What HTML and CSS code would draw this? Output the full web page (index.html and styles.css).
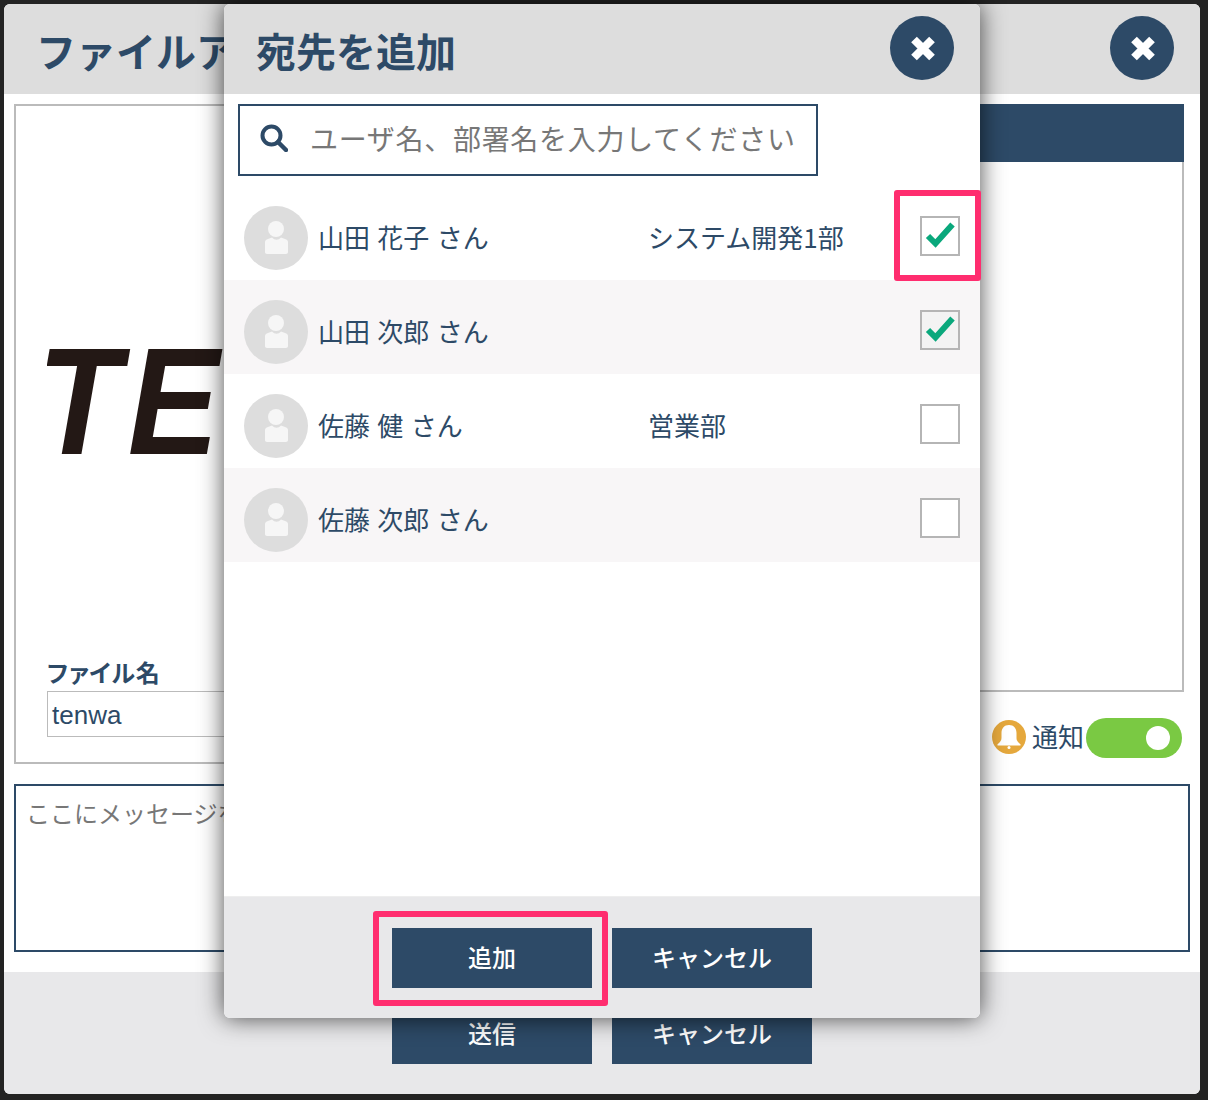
FILE: index.html
```html
<!DOCTYPE html>
<html lang="ja">
<head>
<meta charset="utf-8">
<title>宛先を追加</title>
<link rel="stylesheet" href="styles.css">
</head>
<body>
<div class="screen">
  <div class="dialog">
    <header class="dialog-head">
      <h1 class="title title-main">ファイルアップロード</h1>
      <button class="close"><svg viewBox="0 0 64 64" width="64" height="64"><path d="M24 23.500 L42 41.500 M42 23.500 L24 41.500" class="close-x"/></svg></button>
    </header>
    <div class="dialog-body">
      <div class="top-row">
        <section class="preview">
          <div class="logo-area"><span class="logo">TENWA</span></div>
          <label class="file-label">ファイル名</label>
          <div class="file-input">tenwa</div>
        </section>
        <section class="side">
          <div class="side-head"></div>
          <div class="side-box"></div>
          <div class="notify">
            <svg class="bell" viewBox="0 0 34 34" width="34" height="34"><circle cx="17" cy="17" r="17" fill="#e5a83c"/><path d="M17 5c-4.800 0-7.500 3.300-7.500 8v5c0 2.800-1.800 4.800-4 6.200v1.300h23v-1.300c-2.200-1.400-4-3.400-4-6.200v-5c0-4.700-2.700-8-7.500-8z" fill="#fff"/><circle cx="17" cy="27.500" r="1.500" fill="#fff"/></svg>
            <span class="notify-text">通知</span>
            <span class="toggle"><span class="knob"></span></span>
          </div>
        </section>
      </div>
      <div class="message">ここにメッセージを入力してください</div>
    </div>
    <footer class="foot">
      <button class="btn">送信</button>
      <button class="btn">キャンセル</button>
    </footer>
  </div>

  <div class="modal">
    <header class="dialog-head modal-head">
      <h2 class="title">宛先を追加</h2>
      <button class="close"><svg viewBox="0 0 64 64" width="64" height="64"><path d="M24 23.500 L42 41.500 M42 23.500 L24 41.500" class="close-x"/></svg></button>
    </header>
    <div class="search">
      <svg class="search-icon" viewBox="0 0 28 28" width="28" height="28"><circle cx="11.500" cy="11.500" r="9" fill="none" stroke="#2d4a67" stroke-width="4"/><path d="M18 18 L26 26" stroke="#2d4a67" stroke-width="4.500" stroke-linecap="round"/></svg>
      <span class="placeholder">ユーザ名、部署名を入力してください</span>
    </div>
    <ul class="list">
      <li class="row">
        <svg class="avatar" viewBox="0 0 64 64" width="64" height="64"><circle cx="32" cy="32" r="32" fill="#ddd"/><circle cx="32" cy="23" r="8" fill="#f6f6f6"/><path d="M21 36c0-1.500 1-2.500 3-3l4-1.500c3 3 6 3 9 0l4 1.500c2 .5 3 1.500 3 3v10c0 1-.8 2-2 2H23c-1.200 0-2-1-2-2z" fill="#f6f6f6"/></svg>
        <span class="name">山田 花子 さん</span><span class="dept">システム開発1部</span>
        <span class="check"><svg viewBox="0 0 36 36" width="36" height="36"><path d="M6 18 L13.500 25.500 L30.500 6.500" class="tick"/></svg></span>
      </li>
      <li class="row alt">
        <svg class="avatar" viewBox="0 0 64 64" width="64" height="64"><circle cx="32" cy="32" r="32" fill="#ddd"/><circle cx="32" cy="23" r="8" fill="#f6f6f6"/><path d="M21 36c0-1.500 1-2.500 3-3l4-1.500c3 3 6 3 9 0l4 1.500c2 .5 3 1.500 3 3v10c0 1-.8 2-2 2H23c-1.200 0-2-1-2-2z" fill="#f6f6f6"/></svg>
        <span class="name">山田 次郎 さん</span><span class="dept"></span>
        <span class="check checked-alt"><svg viewBox="0 0 36 36" width="36" height="36"><path d="M6 18 L13.500 25.500 L30.500 6.500" class="tick"/></svg></span>
      </li>
      <li class="row">
        <svg class="avatar" viewBox="0 0 64 64" width="64" height="64"><circle cx="32" cy="32" r="32" fill="#ddd"/><circle cx="32" cy="23" r="8" fill="#f6f6f6"/><path d="M21 36c0-1.500 1-2.500 3-3l4-1.500c3 3 6 3 9 0l4 1.500c2 .5 3 1.500 3 3v10c0 1-.8 2-2 2H23c-1.200 0-2-1-2-2z" fill="#f6f6f6"/></svg>
        <span class="name">佐藤 健 さん</span><span class="dept">営業部</span>
        <span class="check"></span>
      </li>
      <li class="row alt">
        <svg class="avatar" viewBox="0 0 64 64" width="64" height="64"><circle cx="32" cy="32" r="32" fill="#ddd"/><circle cx="32" cy="23" r="8" fill="#f6f6f6"/><path d="M21 36c0-1.500 1-2.500 3-3l4-1.500c3 3 6 3 9 0l4 1.500c2 .5 3 1.500 3 3v10c0 1-.8 2-2 2H23c-1.200 0-2-1-2-2z" fill="#f6f6f6"/></svg>
        <span class="name">佐藤 次郎 さん</span><span class="dept"></span>
        <span class="check"></span>
      </li>
    </ul>
    <footer class="foot modal-foot">
      <button class="btn">追加</button>
      <button class="btn">キャンセル</button>
    </footer>
    <div class="mark mark-check"></div>
    <div class="mark mark-add"></div>
  </div>
</div>
</body>
</html>
```
FILE: styles.css
```css
* { box-sizing: border-box; }
html, body { margin: 0; padding: 0; }
body {
  background: #232323;
  font-family: "Noto Sans CJK JP", "Noto Sans", sans-serif;
  color: #2d4a67;
}
.screen {
  position: relative;
  width: 1208px;
  height: 1100px;
  padding: 4px 8px 6px 4px;
  overflow: hidden;
}
.dialog {
  display: flex;
  flex-direction: column;
  height: 100%;
  background: #fff;
  border-radius: 6px;
  overflow: hidden;
}
.dialog-head {
  display: flex;
  align-items: center;
  justify-content: space-between;
  flex: none;
  height: 90px;
  padding: 0 26px 0 32px;
  background: #ddd;
}
.title {
  margin: 2px 0 0;
  font-size: 40px;
  line-height: 1;
  font-weight: 700;
  color: #2d4a67;
  white-space: nowrap;
}
.close {
  flex: none;
  width: 64px;
  height: 64px;
  padding: 0;
  border: 0;
  border-radius: 50%;
  background: #2d4a67;
  margin-top: -2px;
}
.close svg { display: block; }
.close-x { fill: none; stroke: #fff; stroke-width: 8; stroke-linecap: butt; }

.dialog-body {
  flex: 1;
  display: flex;
  flex-direction: column;
  padding: 10px 10px 20px;
}
.top-row {
  display: grid;
  grid-template-columns: 590px 1fr;
  height: 660px;
  padding-right: 6px;
}
.preview {
  display: flex;
  flex-direction: column;
  border: 2px solid #bbb;
  padding: 0 0 25px 31px;
}
.logo-area { flex: 1; display: flex; align-items: center; padding-top: 36px; overflow: hidden; }
.logo {
  font-family: "Liberation Sans", sans-serif;
  font-weight: 700;
  font-style: italic;
  font-size: 152px;
  line-height: 1;
  color: #231815;
  margin-left: -10px;
  letter-spacing: 8px;
  transform: scaleX(.9);
  transform-origin: left center;
}
.file-label {
  font-size: 24px;
  line-height: 26px;
  font-weight: 700;
  font-feature-settings: "palt";
  letter-spacing: .8px;
  padding-bottom: 6px;
}
.file-input {
  width: 500px;
  height: 46px;
  border: 1px solid #bbb;
  padding-left: 4px;
  font-family: "Liberation Sans", sans-serif;
  font-size: 26px;
  line-height: 46px;
}
.side { display: flex; flex-direction: column; }
.side-head { flex: none; height: 58px; background: #2d4a67; }
.side-box { flex: none; height: 530px; border: 2px solid #bbb; border-top: 0; }
.notify {
  flex: 1;
  display: flex;
  align-items: center;
  justify-content: flex-end;
  padding: 19px 2px 0 0;
}
.bell { flex: none; margin: -1px 6px 0 0; }
.notify-text { font-size: 26px; line-height: 34px; margin: -4px 2px 0 0; }
.toggle {
  display: flex;
  align-items: center;
  justify-content: flex-end;
  width: 96px;
  height: 40px;
  padding-right: 12px;
  border-radius: 20px;
  background: #7ac943;
}
.knob { width: 24px; height: 24px; border-radius: 50%; background: #fff; }
.message {
  flex: 1;
  margin-top: 20px;
  border: 2px solid #2d4a67;
  padding: 10px 10px;
  font-size: 24px;
  line-height: 34px;
  color: #777;
}
.foot {
  display: flex;
  justify-content: center;
  gap: 20px;
  flex: none;
  height: 122px;
  padding-top: 32px;
  background: #e8e8ea;
}
.btn {
  width: 200px;
  height: 60px;
  padding: 0 0 3px;
  border: 0;
  background: #2d4a67;
  color: #fff;
  font-family: inherit;
  font-size: 24px;
  font-weight: 500;
}

.modal {
  position: absolute;
  left: 224px;
  top: 4px;
  width: 756px;
  height: 1014px;
  display: flex;
  flex-direction: column;
  background: #fff;
  border-radius: 6px;
  box-shadow: 0 0 24px rgba(0, 0, 0, .7);
}
.modal-head { border-radius: 6px 6px 0 0; }
.search {
  flex: none;
  display: flex;
  align-items: center;
  width: 580px;
  height: 72px;
  margin: 10px 0 10px 14px;
  border: 2px solid #2d4a67;
  padding-left: 20px;
}
.search-icon { flex: none; margin-right: 22px; margin-top: -4px; }
.placeholder { font-size: 28px; letter-spacing: .7px; color: #777; white-space: nowrap; margin-top: -4px; }
.list { flex: 1; margin: 0; padding: 0; list-style: none; }
.row {
  display: flex;
  align-items: center;
  height: 94px;
  padding: 20px 20px 10px;
}
.alt { background: #f8f6f7; }
.avatar { flex: none; margin-right: 10px; }
.name { flex: none; width: 330px; margin-top: -4px; font-size: 26px; word-spacing: 1.500px; white-space: nowrap; }
.dept { flex: 1; margin-top: -4px; font-size: 26px; white-space: nowrap; }
.check {
  flex: none;
  width: 40px;
  height: 40px;
  margin-bottom: 4px;
  border: 2px solid #b5b5b5;
  background: #fff;
}
.checked-alt { background: #f3f3f3; }
.check svg { display: block; }
.tick { fill: none; stroke: #0aa87c; stroke-width: 6; }
.modal-foot { padding-top: 31px; border-top: 1px solid #eee; border-radius: 0 0 6px 6px; }
.mark {
  position: absolute;
  border: 6px solid #ff2d6f;
  border-radius: 3px;
}
.mark-check { left: 670px; top: 186px; width: 87px; height: 91px; }
.mark-add { left: 149px; top: 907px; width: 235px; height: 95px; }
```
